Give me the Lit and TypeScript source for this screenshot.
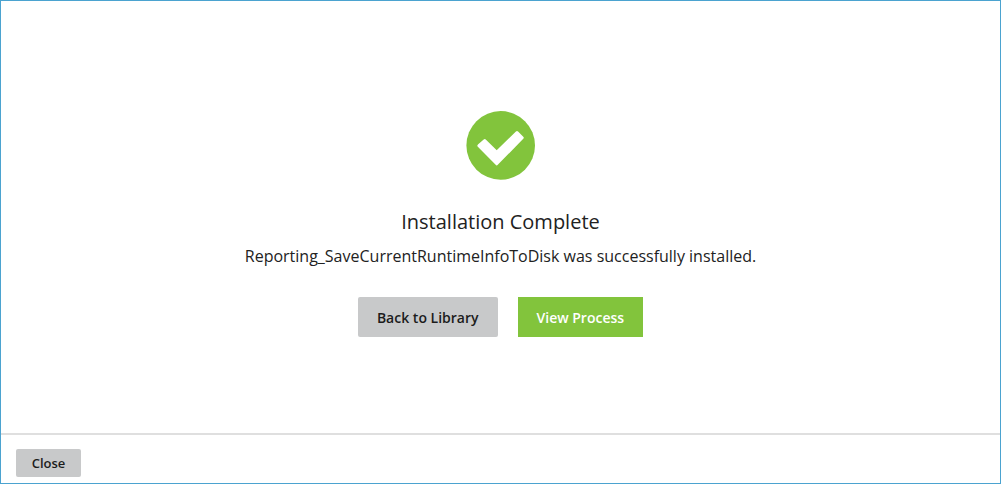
import { LitElement, html, css } from "lit";
import { customElement } from "lit/decorators.js";

@customElement("app-root")
export class AppRoot extends LitElement {
  static styles = css`
    :host {
      display: flex;
      flex-direction: column;
      box-sizing: border-box;
      min-height: 100vh;
      border: 1px solid #4ba3d0;
      background: #fff;
      color: #222;
      font-family: "Open Sans", sans-serif;
    }
    .content {
      flex: 1;
      display: flex;
      flex-direction: column;
      align-items: center;
      padding: 110px 24px 40px;
      text-align: center;
    }
    .badge {
      display: block;
      width: 69px;
      height: 69px;
    }
    h1 {
      margin: 26px 0 0;
      font-size: 20px;
      line-height: 32px;
      font-weight: 400;
    }
    p {
      margin: 6px 0 0;
      font-size: 16px;
      line-height: 24px;
    }
    .actions {
      display: flex;
      flex-wrap: wrap;
      justify-content: center;
      gap: 20px;
      margin-top: 29px;
    }
    button {
      border: 0;
      border-radius: 2px;
      background: #c8c9ca;
      color: #1c1c1c;
      font: 600 14px/20px "Open Sans", sans-serif;
      padding: 11px 19px 9px;
      cursor: pointer;
    }
    .primary {
      border-radius: 0;
      background: #82c43c;
      color: #fff;
    }
    footer {
      border-top: 2px solid #dfdfdf;
      padding: 14px 15px 6px;
      display: flex;
    }
    .close {
      min-width: 65px;
      font-size: 13px;
      padding: 4px 15px;
    }
  `;

  render() {
    return html`
      <main class="content">
        <svg class="badge" viewBox="0 0 69 69" aria-hidden="true">
          <circle cx="34.7" cy="34.4" r="34.3" fill="#82c43c" />
          <path
            d="M12.9 34.7 L18.7 29.5 L30.7 41.4 L51 21.5 L56.2 26.7 L30.7 52.8 Z"
            fill="#fff"
            stroke="#fff"
            stroke-width="3"
            stroke-linejoin="round"
          />
        </svg>
        <h1>Installation Complete</h1>
        <p>Reporting_SaveCurrentRuntimeInfoToDisk was successfully installed.</p>
        <div class="actions">
          <button type="button">Back to Library</button>
          <button type="button" class="primary">View Process</button>
        </div>
      </main>
      <footer><button type="button" class="close">Close</button></footer>
    `;
  }
}
